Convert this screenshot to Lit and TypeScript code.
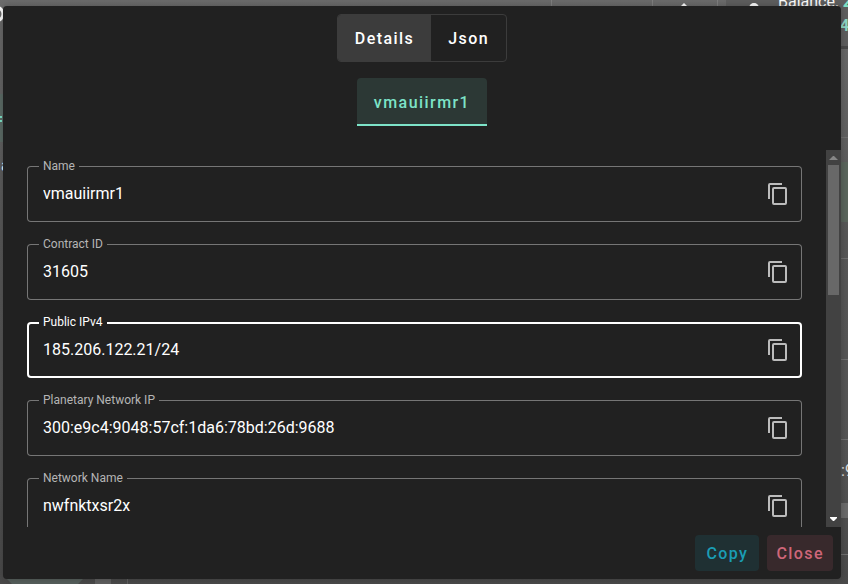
import { LitElement, html, css } from "lit";
import { customElement, property, state } from "lit/decorators.js";
import { classMap } from "lit/directives/class-map.js";

@customElement("copy-field")
class CopyField extends LitElement {
  @property() label = "";
  @property() value = "";
  @property({ type: Boolean }) active = false;

  static styles = css`
    :host {
      display: block;
    }
    .field {
      position: relative;
      box-sizing: border-box;
      height: 56px;
      display: flex;
      align-items: center;
      border-radius: 4px;
      box-shadow: inset 0 0 0 1px #767676;
      padding: 0 12px 0 16px;
      color: #fff;
    }
    .field.active {
      box-shadow: inset 0 0 0 2px #fff;
    }
    label {
      position: absolute;
      top: -8px;
      left: 12px;
      padding: 0 4px;
      background: #212121;
      color: #b5b5b5;
      font-size: 12px;
      line-height: 16px;
    }
    .active label {
      color: #fff;
    }
    input {
      flex: 1;
      min-width: 0;
      border: 0;
      outline: 0;
      padding: 0;
      background: none;
      color: inherit;
      font: 16px/24px Roboto, sans-serif;
    }
    button {
      border: 0;
      padding: 0;
      background: none;
      color: #bcbcbc;
      width: 24px;
      height: 24px;
    }
    svg {
      display: block;
      width: 24px;
      height: 24px;
      fill: currentColor;
    }
  `;

  render() {
    return html`<div class=${classMap({ field: true, active: this.active })}>
      <label for="value">${this.label}</label>
      <input id="value" type="text" readonly .value=${this.value} />
      <button type="button" aria-label="Copy ${this.label}">
        <svg viewBox="0 0 24 24">
          <path d="M19,21H8V7H19M19,5H8A2,2 0 0,0 6,7V21A2,2 0 0,0 8,23H19A2,2 0 0,0 21,21V7A2,2 0 0,0 19,5M16,1H4A2,2 0 0,0 2,3V17H4V3H16V1Z" />
        </svg>
      </button>
    </div>`;
  }
}

@customElement("app-root")
class AppRoot extends LitElement {
  @state() private view = "Details";

  private fields = [
    { label: "Name", value: "vmauiirmr1" },
    { label: "Contract ID", value: "31605" },
    { label: "Public IPv4", value: "185.206.122.21/24", active: true },
    { label: "Planetary Network IP", value: "300:e9c4:9048:57cf:1da6:78bd:26d:9688" },
    { label: "Network Name", value: "nwfnktxsr2x" },
  ];

  static styles = css`
    :host {
      position: relative;
      box-sizing: border-box;
      display: flex;
      height: 100vh;
      padding: 6px 7px 5px 3px;
      overflow: hidden;
      background: linear-gradient(#6c6c6c, #585858 40%, #545454 80%, #4a4a4a);
      font-family: Roboto, sans-serif;
      color: #fff;
    }
    .page {
      position: absolute;
      inset: 0;
      width: 100%;
      height: 100%;
    }
    .page.right {
      left: auto;
      width: 300px;
    }
    .dialog {
      position: relative;
      flex: 1;
      min-width: 0;
      display: flex;
      flex-direction: column;
      background: #212121;
      border-radius: 4px;
      box-shadow: 0 0 8px rgba(0, 0, 0, 0.25);
      overflow: hidden;
    }
    button {
      font: 500 16px/24px Roboto, sans-serif;
      letter-spacing: 0.09em;
    }
    .toggle {
      align-self: center;
      display: flex;
      box-sizing: border-box;
      height: 48px;
      margin-top: 8px;
      border: 1px solid #3c3c3c;
      border-radius: 4px;
      overflow: hidden;
    }
    .toggle button {
      border: 0;
      padding: 2px 17px 0;
      background: none;
      color: #fff;
    }
    .toggle button.on {
      background: #3c3c3c;
    }
    .tab {
      align-self: center;
      height: 48px;
      margin: 16px 0 24px;
      padding: 4px 17px 0;
      border: 0;
      border-bottom: 2px solid #7de3c8;
      border-radius: 4px 4px 0 0;
      background: #2c3835;
      color: #7de3c8;
    }
    .body {
      flex: 1;
      min-height: 0;
      display: flex;
    }
    .list {
      flex: 1;
      min-width: 0;
      overflow: hidden;
      display: flex;
      flex-direction: column;
      gap: 22px;
      padding: 16px 24px 0;
    }
    .bar {
      width: 15px;
      display: flex;
      flex-direction: column;
      justify-content: space-between;
      background: #424242;
    }
    .bar svg {
      display: block;
      width: 15px;
      height: 15px;
      fill: #868686;
    }
    .bar svg.down {
      fill: #fff;
    }
    .thumb {
      flex: 0 0 130px;
      margin: 0 2px auto;
      background: #686868;
    }
    .actions {
      display: flex;
      justify-content: flex-end;
      gap: 8px;
      padding: 8px;
    }
    .actions button {
      height: 36px;
      min-width: 64px;
      border: 0;
      border-radius: 4px;
      padding: 2px 9px 0;
      background: #1f3033;
      color: #1a9db5;
    }
    .actions button.close {
      background: #38292c;
      color: #cf6679;
    }
  `;

  render() {
    return html`
      <svg class="page" aria-hidden="true">
        <rect y="94" width="3" height="48" fill="#5c6b66" />
        <ellipse cx="-4" cy="14" rx="7" ry="7" fill="none" stroke="#fff" stroke-width="3" />
        <rect y="116" width="2" height="2" fill="#7de3c8" />
        <rect y="120" width="2" height="2" fill="#7de3c8" />
        <text x="1" y="171" font-size="16" fill="#fff">a</text>
        <path d="M6 578H84L78 584H12Z" fill="#57605d" />
        <path d="M95 579h16v5h-16zM127 579h1v5h-1z" fill="#606060" />
      </svg>
      <svg class="page right" aria-hidden="true">
        <path d="M3.500 0V6M104.500 0V6M169.500 0V6" stroke="#808080" />
        <rect x="178" width="122" height="47" fill="#5f5f5f" />
        <path d="M136 3L140 7H132Z" fill="#fff" />
        <circle cx="206" cy="8" r="5" fill="#fff" />
        <text x="230" y="7" font-size="16" fill="#fff">Balance: <tspan fill="#7de3c8" font-weight="700">2</tspan></text>
        <text x="292" y="31" font-size="16" font-weight="700" fill="#8fd9c6">40</text>
        <rect x="292" y="46" width="8" height="3" fill="#4a4a4a" />
        <rect x="292" y="162" width="8" height="60" fill="#5b665d" />
        <path d="M292 137.500h8M292 258.500h8M292 359.500h8M292 439.500h8M292 554.500h8" stroke="#707070" />
        <text x="293" y="476" font-size="16" fill="#e0e0e0">:9</text>
        <rect x="292" y="503" width="8" height="15" fill="#6c6c6c" />
      </svg>
      <div class="dialog" role="dialog" aria-label="Deployment details">
        <div class="toggle">
          ${["Details", "Json"].map(
            (name) => html`<button
              type="button"
              class=${classMap({ on: this.view === name })}
              @click=${() => (this.view = name)}
            >${name}</button>`
          )}
        </div>
        <button type="button" class="tab">vmauiirmr1</button>
        <div class="body">
          <div class="list">
            ${this.fields.map(
              (f) => html`<copy-field .label=${f.label} .value=${f.value} .active=${!!f.active}></copy-field>`
            )}
          </div>
          <div class="bar">
            <svg viewBox="0 0 15 15"><path d="M7 6h1l4 4H3z" /></svg>
            <div class="thumb"></div>
            <svg class="down" viewBox="0 0 15 15"><path d="M4 5h7v1l-3 3h-1l-3-3z" /></svg>
          </div>
        </div>
        <div class="actions">
          <button type="button">Copy</button>
          <button type="button" class="close">Close</button>
        </div>
      </div>
    `;
  }
}
